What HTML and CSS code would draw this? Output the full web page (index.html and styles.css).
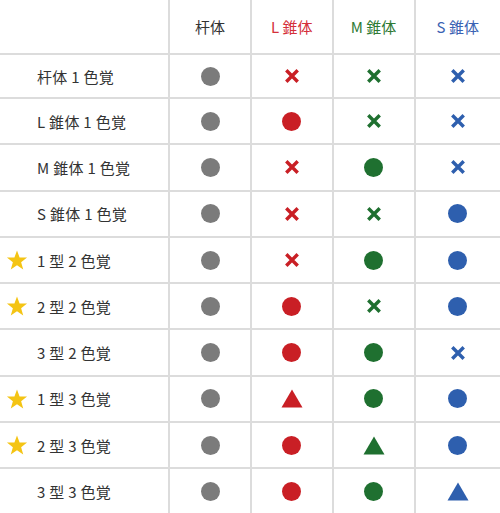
FILE: index.html
```html
<!DOCTYPE html>
<html lang="ja">
<head>
<meta charset="utf-8">
<link rel="stylesheet" href="styles.css">
</head>
<body>
<div class="grid">
  <div class="cell label"></div>
  <div class="cell head">杆体</div>
  <div class="cell head red">L 錐体</div>
  <div class="cell head green">M 錐体</div>
  <div class="cell head blue">S 錐体</div>

  <div class="cell label"><span class="star"></span><span>杆体 1 色覚</span></div>
  <div class="cell"><span class="dot grey"></span></div>
  <div class="cell"><svg class="x red" viewBox="0 0 14 14"><path d="M2 2L12 12M12 2L2 12"/></svg></div>
  <div class="cell"><svg class="x green" viewBox="0 0 14 14"><path d="M2 2L12 12M12 2L2 12"/></svg></div>
  <div class="cell"><svg class="x blue" viewBox="0 0 14 14"><path d="M2 2L12 12M12 2L2 12"/></svg></div>

  <div class="cell label"><span class="star"></span><span>L 錐体 1 色覚</span></div>
  <div class="cell"><span class="dot grey"></span></div>
  <div class="cell"><span class="dot red-bg"></span></div>
  <div class="cell"><svg class="x green" viewBox="0 0 14 14"><path d="M2 2L12 12M12 2L2 12"/></svg></div>
  <div class="cell"><svg class="x blue" viewBox="0 0 14 14"><path d="M2 2L12 12M12 2L2 12"/></svg></div>

  <div class="cell label"><span class="star"></span><span>M 錐体 1 色覚</span></div>
  <div class="cell"><span class="dot grey"></span></div>
  <div class="cell"><svg class="x red" viewBox="0 0 14 14"><path d="M2 2L12 12M12 2L2 12"/></svg></div>
  <div class="cell"><span class="dot green-bg"></span></div>
  <div class="cell"><svg class="x blue" viewBox="0 0 14 14"><path d="M2 2L12 12M12 2L2 12"/></svg></div>

  <div class="cell label"><span class="star"></span><span>S 錐体 1 色覚</span></div>
  <div class="cell"><span class="dot grey"></span></div>
  <div class="cell"><svg class="x red" viewBox="0 0 14 14"><path d="M2 2L12 12M12 2L2 12"/></svg></div>
  <div class="cell"><svg class="x green" viewBox="0 0 14 14"><path d="M2 2L12 12M12 2L2 12"/></svg></div>
  <div class="cell"><span class="dot blue-bg"></span></div>

  <div class="cell label"><svg class="star" viewBox="0 0 24 24"><path d="M12 1.5L14.8 9.2L23 9.4L16.5 14.4L18.8 22.3L12 17.7L5.2 22.3L7.5 14.4L1 9.4L9.2 9.2Z"/></svg><span>1 型 2 色覚</span></div>
  <div class="cell"><span class="dot grey"></span></div>
  <div class="cell"><svg class="x red" viewBox="0 0 14 14"><path d="M2 2L12 12M12 2L2 12"/></svg></div>
  <div class="cell"><span class="dot green-bg"></span></div>
  <div class="cell"><span class="dot blue-bg"></span></div>

  <div class="cell label"><svg class="star" viewBox="0 0 24 24"><path d="M12 1.5L14.8 9.2L23 9.4L16.5 14.4L18.8 22.3L12 17.7L5.2 22.3L7.5 14.4L1 9.4L9.2 9.2Z"/></svg><span>2 型 2 色覚</span></div>
  <div class="cell"><span class="dot grey"></span></div>
  <div class="cell"><span class="dot red-bg"></span></div>
  <div class="cell"><svg class="x green" viewBox="0 0 14 14"><path d="M2 2L12 12M12 2L2 12"/></svg></div>
  <div class="cell"><span class="dot blue-bg"></span></div>

  <div class="cell label"><span class="star"></span><span>3 型 2 色覚</span></div>
  <div class="cell"><span class="dot grey"></span></div>
  <div class="cell"><span class="dot red-bg"></span></div>
  <div class="cell"><span class="dot green-bg"></span></div>
  <div class="cell"><svg class="x blue" viewBox="0 0 14 14"><path d="M2 2L12 12M12 2L2 12"/></svg></div>

  <div class="cell label"><svg class="star" viewBox="0 0 24 24"><path d="M12 1.5L14.8 9.2L23 9.4L16.5 14.4L18.8 22.3L12 17.7L5.2 22.3L7.5 14.4L1 9.4L9.2 9.2Z"/></svg><span>1 型 3 色覚</span></div>
  <div class="cell"><span class="dot grey"></span></div>
  <div class="cell"><svg class="tri red" viewBox="0 0 22 19"><path d="M11 0.5L21.5 18.5H0.5Z"/></svg></div>
  <div class="cell"><span class="dot green-bg"></span></div>
  <div class="cell"><span class="dot blue-bg"></span></div>

  <div class="cell label"><svg class="star" viewBox="0 0 24 24"><path d="M12 1.5L14.8 9.2L23 9.4L16.5 14.4L18.8 22.3L12 17.7L5.2 22.3L7.5 14.4L1 9.4L9.2 9.2Z"/></svg><span>2 型 3 色覚</span></div>
  <div class="cell"><span class="dot grey"></span></div>
  <div class="cell"><span class="dot red-bg"></span></div>
  <div class="cell"><svg class="tri green" viewBox="0 0 22 19"><path d="M11 0.5L21.5 18.5H0.5Z"/></svg></div>
  <div class="cell"><span class="dot blue-bg"></span></div>

  <div class="cell label"><span class="star"></span><span>3 型 3 色覚</span></div>
  <div class="cell"><span class="dot grey"></span></div>
  <div class="cell"><span class="dot red-bg"></span></div>
  <div class="cell"><span class="dot green-bg"></span></div>
  <div class="cell"><svg class="tri blue" viewBox="0 0 22 19"><path d="M11 0.5L21.5 18.5H0.5Z"/></svg></div>
</div>
</body>
</html>
```

FILE: styles.css
```css
html, body {
  margin: 0;
  padding: 0;
  background: #ffffff;
}
body {
  font-family: "Noto Sans CJK JP", "Noto Sans", sans-serif;
  font-size: 15px;
  color: #333333;
  overflow: hidden;
}
.grid {
  display: grid;
  grid-template-columns: 168px 80px 79.5px 80px 1fr;
  grid-template-rows: 53px 42px repeat(9, 44.3px);
  gap: 2px;
  background: #dcdcdc;
  width: 500px;
}
.cell {
  background: #ffffff;
  display: flex;
  align-items: center;
  justify-content: center;
}
.head {
  color: #333333;
}
.head.red { color: #d4303a; }
.head.green { color: #2e7a35; }
.head.blue { color: #3a62b3; }
.label {
  justify-content: flex-start;
  padding-left: 6px;
  gap: 9px;
  color: #333333;
  letter-spacing: 0.3px;
}
.star {
  display: block;
  width: 22px;
  height: 22px;
  flex: none;
  fill: #f4c414;
}
.dot {
  display: block;
  width: 19px;
  height: 19px;
  border-radius: 50%;
}
.grey { background: #7b7b7b; }
.red-bg { background: #c91f25; }
.green-bg { background: #1f7030; }
.blue-bg { background: #2e5fae; }
.x {
  width: 16px;
  height: 16px;
  fill: none;
  stroke-width: 3;
}
.x.red { stroke: #c91f25; }
.x.green { stroke: #1f7030; }
.x.blue { stroke: #2e5fae; }
.tri {
  width: 22px;
  height: 19px;
}
.tri.red { fill: #c91f25; }
.tri.green { fill: #1f7030; }
.tri.blue { fill: #2e5fae; }
```
